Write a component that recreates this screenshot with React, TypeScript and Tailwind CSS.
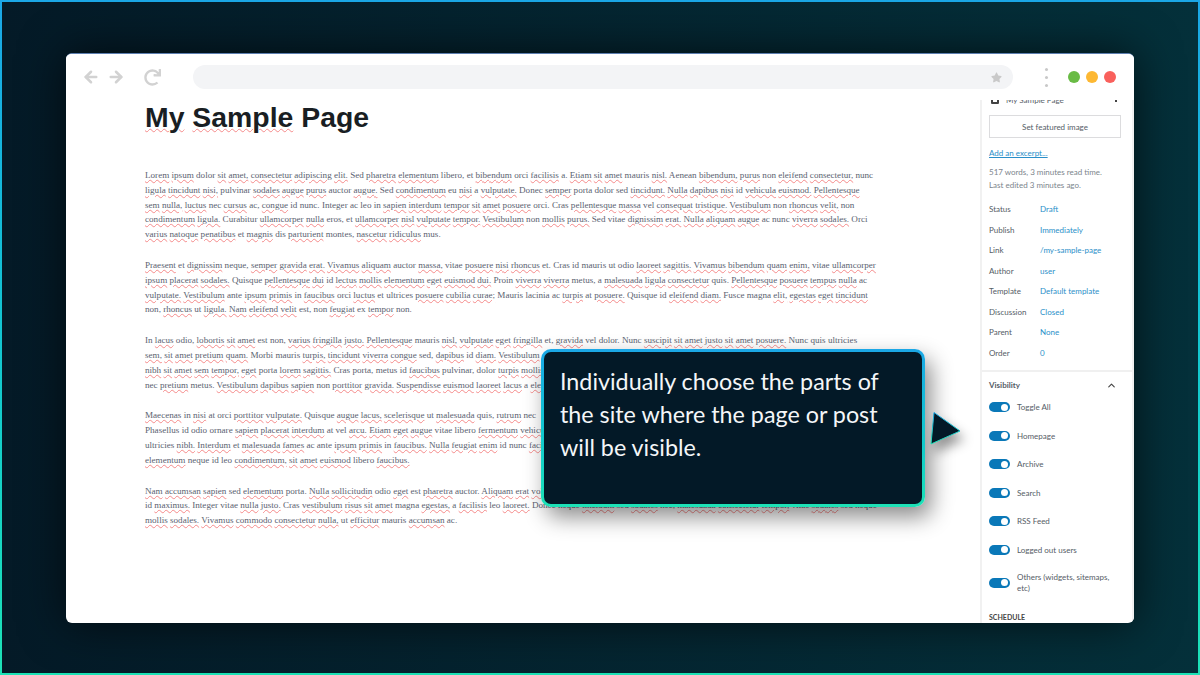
import { ArrowLeft, ArrowRight, ChevronUp } from "lucide-react";
import { FaRedo, FaStar } from "react-icons/fa";

// words the spell checker of the editor accepts; the rest get a red wave
const knownWords = new Set(
  "dolor sed libero et a in id non ac ante at ut est nec eu nunc integer leo odio mus magna neque vitae quis ex auctor porta pulvinar ultrices mauris lacinia cras morbi quisque fusce donec aenean phasellus curabitur eros ornare proin dis montes vel page ultricies metus orci".split(" ")
);

const paragraphs: string[][] = [
  [
    "Lorem ipsum dolor sit amet, consectetur adipiscing elit. Sed pharetra elementum libero, et bibendum orci facilisis a. Etiam sit amet mauris nisl. Aenean bibendum, purus non eleifend consectetur, nunc",
    "ligula tincidunt nisi, pulvinar sodales augue purus auctor augue. Sed condimentum eu nisi a vulputate. Donec semper porta dolor sed tincidunt. Nulla dapibus nisi id vehicula euismod. Pellentesque",
    "sem nulla, luctus nec cursus ac, congue id nunc. Integer ac leo in sapien interdum tempor sit amet posuere orci. Cras pellentesque massa vel consequat tristique. Vestibulum non rhoncus velit, non",
    "condimentum ligula. Curabitur ullamcorper nulla eros, et ullamcorper nisl vulputate tempor. Vestibulum non mollis purus. Sed vitae dignissim erat. Nulla aliquam augue ac nunc viverra sodales. Orci",
    "varius natoque penatibus et magnis dis parturient montes, nascetur ridiculus mus.",
  ],
  [
    "Praesent et dignissim neque, semper gravida erat. Vivamus aliquam auctor massa, vitae posuere nisi rhoncus et. Cras id mauris ut odio laoreet sagittis. Vivamus bibendum quam enim, vitae ullamcorper",
    "ipsum placerat sodales. Quisque pellentesque dui id lectus mollis elementum eget euismod dui. Proin viverra viverra metus, a malesuada ligula consectetur quis. Pellentesque posuere tempus nulla ac",
    "vulputate. Vestibulum ante ipsum primis in faucibus orci luctus et ultrices posuere cubilia curae; Mauris lacinia ac turpis at posuere. Quisque id eleifend diam. Fusce magna elit, egestas eget tincidunt",
    "non, rhoncus ut ligula. Nam eleifend velit est, non feugiat ex tempor non.",
  ],
  [
    "In lacus odio, lobortis sit amet est non, varius fringilla justo. Pellentesque mauris nisl, vulputate eget fringilla et, gravida vel dolor. Nunc suscipit sit amet justo sit amet posuere. Nunc quis ultricies",
    "sem, sit amet pretium quam. Morbi mauris turpis, tincidunt viverra congue sed, dapibus id diam. Vestibulum",
    "nibh sit amet sem tempor, eget porta lorem sagittis. Cras porta, metus id faucibus pulvinar, dolor turpis mollis",
    "nec pretium metus. Vestibulum dapibus sapien non porttitor gravida. Suspendisse euismod laoreet lacus a elementum.",
  ],
  [
    "Maecenas in nisi at orci porttitor vulputate. Quisque augue lacus, scelerisque ut malesuada quis, rutrum nec",
    "Phasellus id odio ornare sapien placerat interdum at vel arcu. Etiam eget augue vitae libero fermentum vehicula",
    "ultricies nibh. Interdum et malesuada fames ac ante ipsum primis in faucibus. Nulla feugiat enim id nunc facilisis",
    "elementum neque id leo condimentum, sit amet euismod libero faucibus.",
  ],
  [
    "Nam accumsan sapien sed elementum porta. Nulla sollicitudin odio eget est pharetra auctor. Aliquam erat volutpat.",
    "id maximus. Integer vitae nulla justo. Cras vestibulum risus sit amet magna egestas, a facilisis leo laoreet. Donec neque tincidunt sed sodales nec, malesuada consectetur tempor, vitae sodales sed neque",
    "mollis sodales. Vivamus commodo consectetur nulla, ut efficitur mauris accumsan ac.",
  ],
];

const meta = [
  ["Status", "Draft"],
  ["Publish", "Immediately"],
  ["Link", "/my-sample-page"],
  ["Author", "user"],
  ["Template", "Default template"],
  ["Discussion", "Closed"],
  ["Parent", "None"],
  ["Order", "0"],
];

const toggles = ["Toggle All", "Homepage", "Archive", "Search", "RSS Feed", "Logged out users"];

function Spelled({ text }: { text: string }) {
  return (
    <>
      {text.split(" ").map((word, index) => {
        const bare = word.replace(/[^a-zA-Z]/g, "").toLowerCase();
        return (
          <span key={index}>
            {index > 0 ? " " : ""}
            <span className={knownWords.has(bare) ? "" : "underline decoration-wavy decoration-[#f58a8a] decoration-1 underline-offset-1"}>
              {word}
            </span>
          </span>
        );
      })}
    </>
  );
}

function Toggle() {
  return (
    <span className="flex h-[10px] w-[21px] shrink-0 items-center justify-end rounded-full bg-[#0a78b8] pr-[2px]">
      <span className="h-[7px] w-[7px] rounded-full bg-white" />
    </span>
  );
}

function Sidebar() {
  return (
    <aside className="flex h-[523px] w-[154px] shrink-0 flex-col overflow-hidden border-x-2 border-x-[#f1f1f1] font-['Lato',sans-serif] text-[8px] text-[#555d66] *:shrink-0">
      <div className="-mt-[7px] flex h-[14px] items-center justify-between pl-[9px] pr-[15px]">
        <span className="h-[8px] w-[8px] rounded-[1px] border-2 border-[#444]" />
        <span className="ml-[7px] flex-1">My Sample Page</span>
        <span className="h-[3px] w-[2px] bg-[#444]" />
      </div>
      <button
        type="button"
        className="mx-[7px] mt-[8px] h-[23px] w-[132px] border border-[#dcdcde] text-center text-[#555d66]"
      >
        Set featured image
      </button>
      <a className="ml-[7px] mt-[9px] text-[#2a8fc9] underline">Add an excerpt...</a>
      <p className="ml-[7px] mt-[7px] leading-[13px] text-[#7c858c]">
        517 words, 3 minutes read time.
        <br />
        Last edited 3 minutes ago.
      </p>
      <dl className="ml-[7px] mt-[7px] flex flex-col">
        {meta.map(([label, value]) => (
          <div key={label} className="flex h-[20.5px] items-center">
            <dt className="w-[51px]">{label}</dt>
            <dd className="text-[#2a8fc9]">{value}</dd>
          </div>
        ))}
      </dl>
      <div className="mt-[7px] border-t-2 border-[#f0f0f0] pl-[7px] pr-[15px] pt-[6px]">
        <div className="flex h-[14px] items-center justify-between font-bold">
          <span>Visibility</span>
          <ChevronUp size={11} strokeWidth={2.5} className="text-[#444]" />
        </div>
        <div className="mt-[10px] flex flex-col gap-[18.6px]">
          {toggles.map((label) => (
            <div key={label} className="flex h-[10px] items-center gap-[7px]">
              <Toggle />
              <span>{label}</span>
            </div>
          ))}
          <div className="-mt-[2px] flex items-center gap-[7px] leading-[11px]">
            <Toggle />
            <span>
              Others (widgets, sitemaps,
              <br />
              etc)
            </span>
          </div>
        </div>
        <p className="mt-[18px] text-[7px] font-bold uppercase text-[#444]">Schedule</p>
      </div>
    </aside>
  );
}

export default function App() {
  return (
    <div className="h-[675px] w-[1200px] overflow-hidden bg-gradient-to-b from-[#1ba7e6] to-[#1de2b6] p-[2px]">
      <div className="relative flex h-full w-full items-start bg-gradient-to-r from-[#041a27] to-[#04303a] pl-[64px] pt-[51px]">
        <div className="relative h-[570px] w-[1068px] overflow-hidden rounded-[6px] border-t border-t-[#5d7fb0] bg-white shadow-[0_0_45px_rgba(0,0,0,0.65)]">
          <header className="relative z-10 flex h-[46px] items-center bg-white">
            <div className="ml-[16px] flex items-center text-[#d2d2d2]">
              <ArrowLeft size={18} strokeWidth={3.4} />
              <ArrowRight size={18} strokeWidth={3.4} className="ml-[7px]" />
              <FaRedo size={17} className="ml-[19px]" />
            </div>
            <div className="ml-[32px] flex h-[24px] w-[820px] items-center justify-end rounded-full bg-[#f3f4f6] pr-[11px]">
              <FaStar size={11} className="text-[#c9c9c9]" />
            </div>
            <div className="ml-[32px] flex flex-col gap-[5px]">
              <span className="h-[3px] w-[3px] rounded-full bg-[#c8c8c8]" />
              <span className="h-[3px] w-[3px] rounded-full bg-[#c8c8c8]" />
              <span className="h-[3px] w-[3px] rounded-full bg-[#c8c8c8]" />
            </div>
            <div className="ml-[20px] flex gap-[6px]">
              <span className="h-[12px] w-[12px] rounded-full bg-[#69bb45]" />
              <span className="h-[12px] w-[12px] rounded-full bg-[#fdb833]" />
              <span className="h-[12px] w-[12px] rounded-full bg-[#f9605c]" />
            </div>
          </header>
          <div className="flex">
            <main className="min-w-0 flex-1 overflow-hidden pl-[79px]">
              <h1 className="-mt-[1px] font-['Liberation_Sans',sans-serif] text-[28.4px] font-bold leading-[36px] text-[#191e23]">
                <Spelled text="My Sample Page" />
              </h1>
              <div className="mt-[33px] flex flex-col gap-[16px] font-['Liberation_Serif',serif] text-[9.11px] leading-[14.8px] text-[#5a6270]">
                {paragraphs.map((lines, index) => (
                  <div key={index}>
                    {lines.map((line) => (
                      <p key={line} className="whitespace-nowrap">
                        <Spelled text={line} />
                      </p>
                    ))}
                  </div>
                ))}
              </div>
            </main>
            <Sidebar />
          </div>
        </div>

        <div className="absolute left-[539px] top-[347px] h-[158px] w-[384px] rounded-[10px] bg-gradient-to-b from-[#1ba7e6] to-[#1de2b6] p-[3px] shadow-[6px_10px_22px_rgba(0,0,0,0.45)]">
          <div className="h-full w-full rounded-[7px] bg-[#031927] pl-[16px] pt-[13px] font-['Lato',sans-serif] text-[23.3px] leading-[33px] text-[#f4f6f8]">
            Individually choose the parts of
            <br />
            the site where the page or post
            <br />
            will be visible.
          </div>
        </div>
        <svg
          className="absolute left-[926px] top-[406px] drop-shadow-[4px_8px_6px_rgba(0,0,0,0.4)]"
          width="38"
          height="42"
          viewBox="0 0 38 42"
        >
          <defs>
            <linearGradient id="arrow-edge" x1="0" y1="0" x2="0" y2="1">
              <stop offset="0" stopColor="#1ba7e6" />
              <stop offset="1" stopColor="#1de2b6" />
            </linearGradient>
          </defs>
          <path d="M6 4.5 32 23 3 36Z" fill="#031927" stroke="url(#arrow-edge)" strokeWidth="1" />
        </svg>
      </div>
    </div>
  );
}
